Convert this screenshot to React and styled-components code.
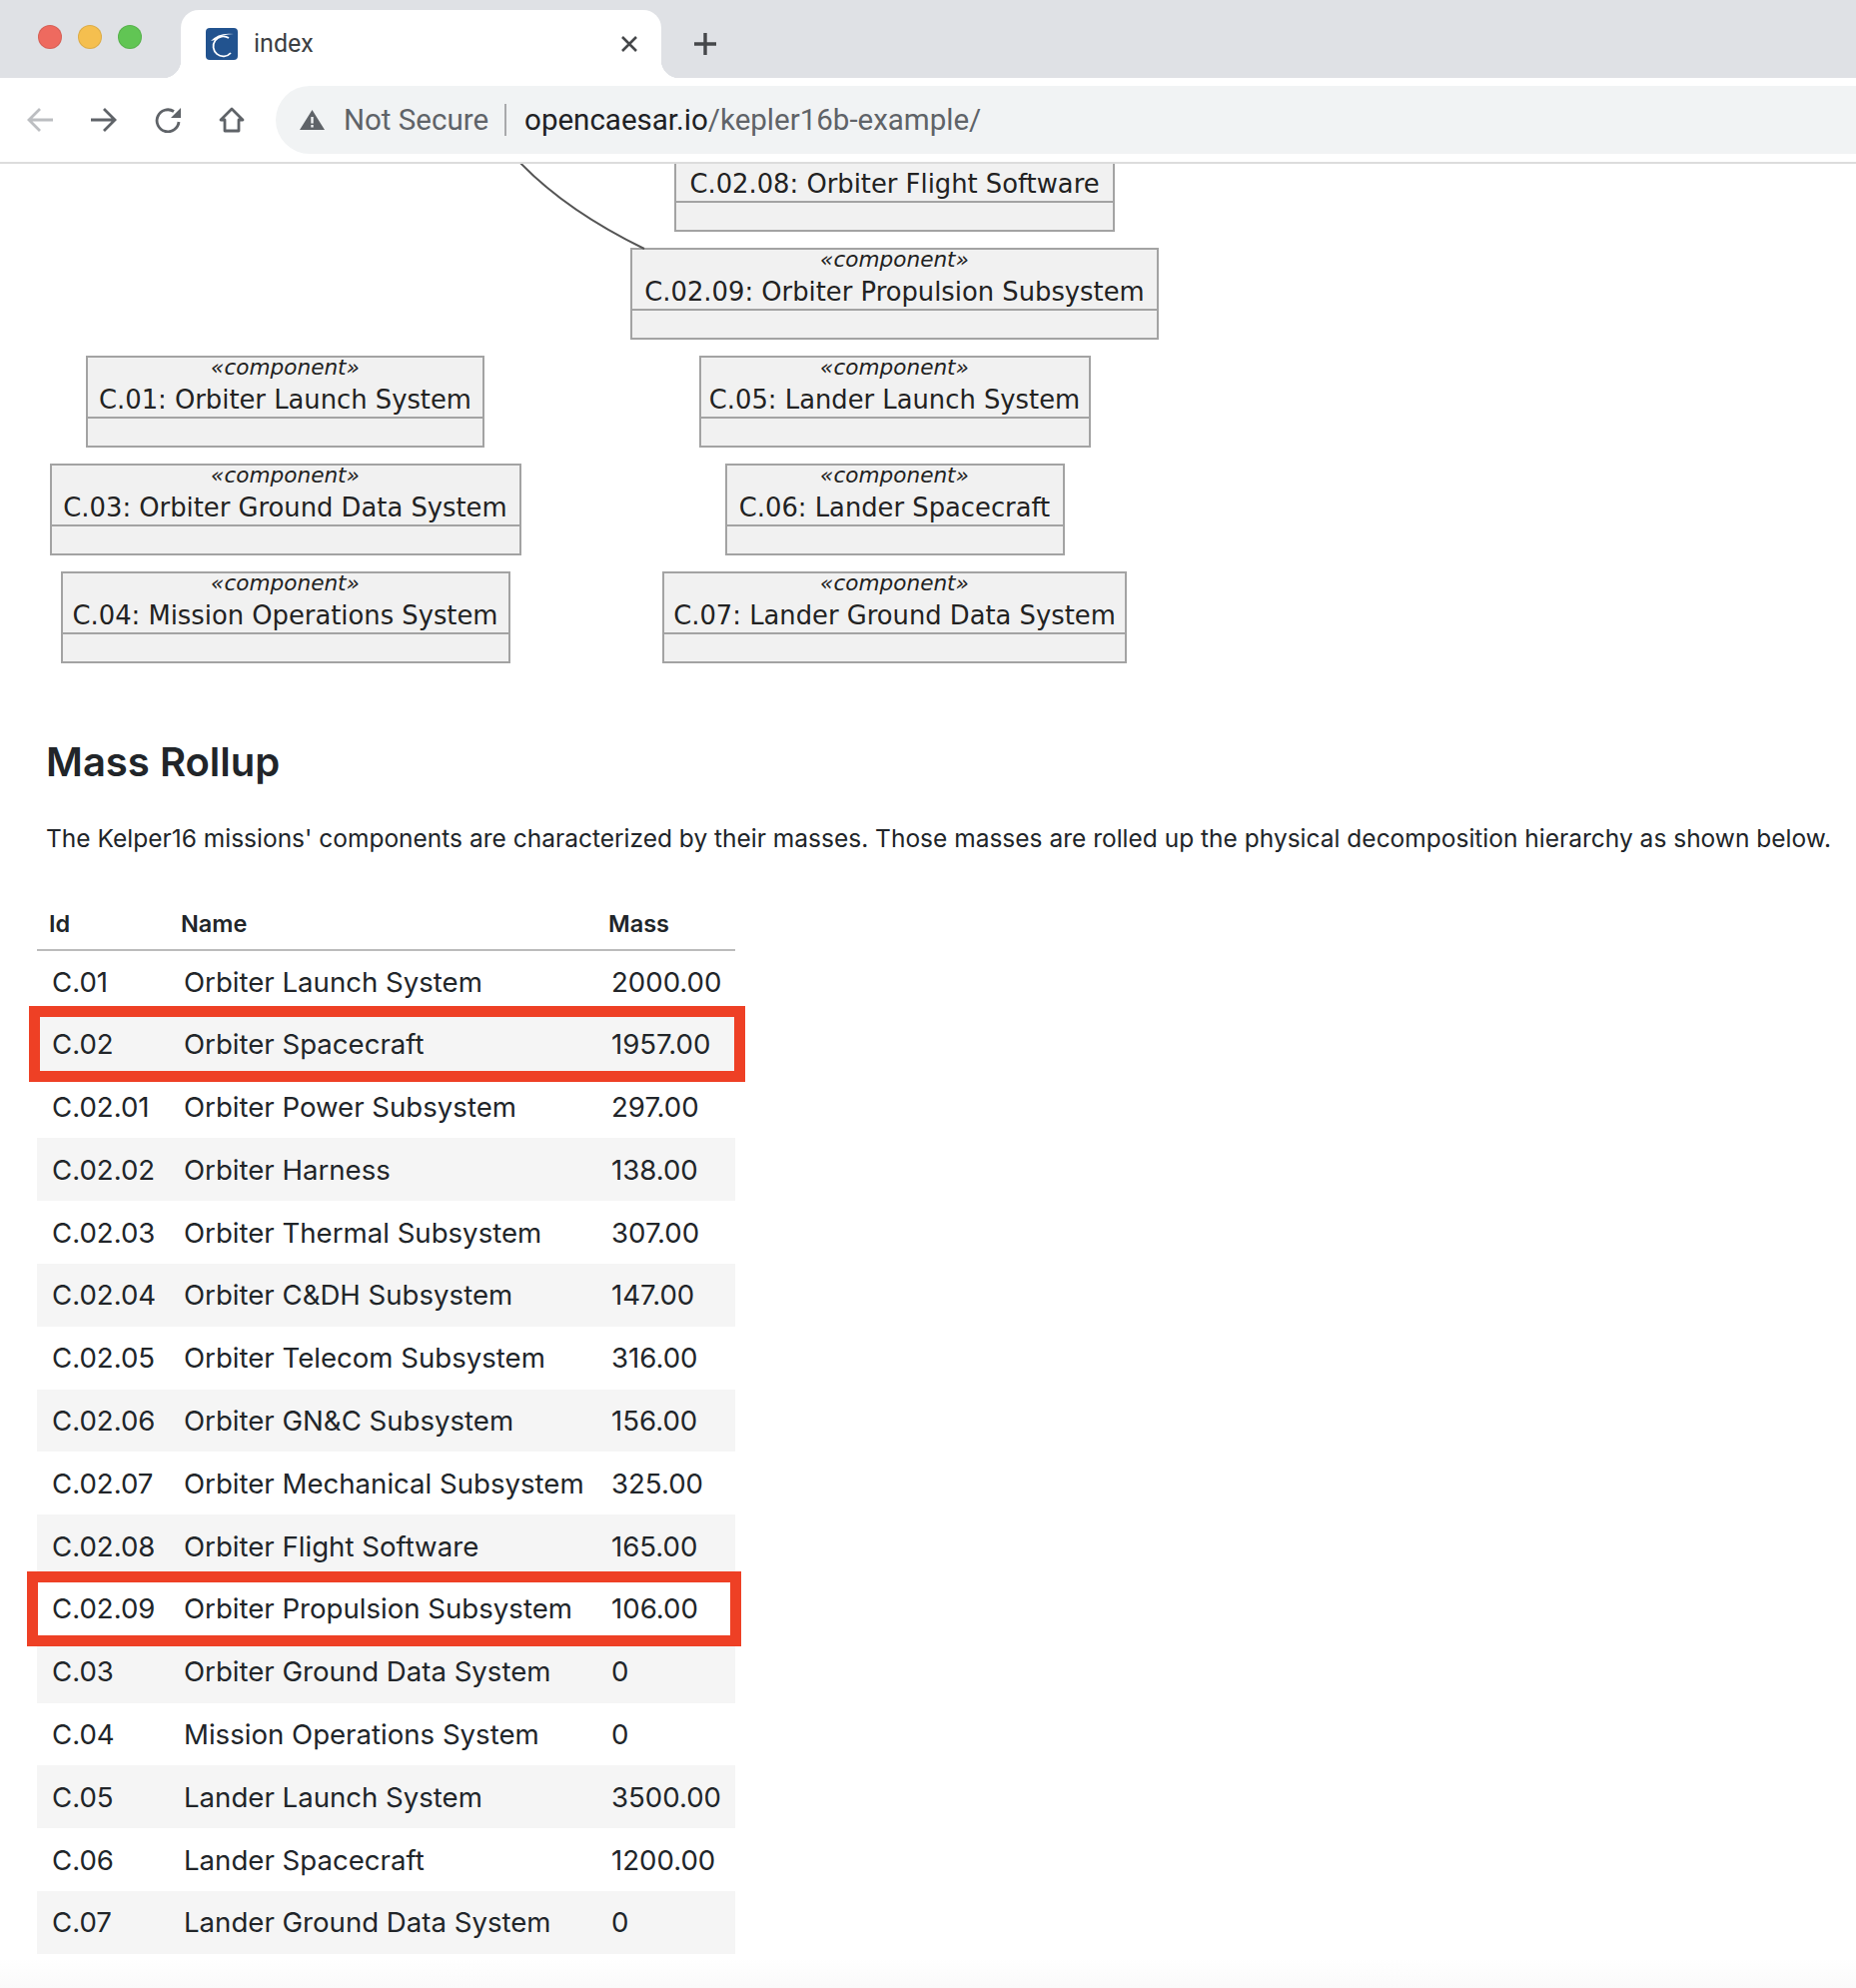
import React from 'react';
import styled, { createGlobalStyle } from 'styled-components';

const GlobalStyle = createGlobalStyle`
  html, body {
    margin: 0;
    background: #fff;
  }
`;

const Page = styled.div`
  width: 1858px;
  height: 1990px;
  overflow: hidden;
  display: flex;
  flex-direction: column;
  background: linear-gradient(to bottom, #fff 1960px, #fafafa 1990px);
`;

/* browser chrome */
const TabBar = styled.div`
  height: 78px;
  flex: none;
  display: flex;
  background: #dfe1e5;
  font-family: Roboto, sans-serif;
`;

const Lights = styled.div`
  width: 181px;
  flex: none;
  display: flex;
  gap: 16px;
  padding: 25px 0 0 38px;
  box-sizing: border-box;
`;

const Light = styled.span`
  width: 24px;
  height: 24px;
  border-radius: 50%;
  background: ${p => p.$color};
  box-shadow: inset 0 0 0 1px rgba(0, 0, 0, .1);
`;

const Tab = styled.div`
  position: relative;
  width: 481px;
  height: 68px;
  margin-top: 10px;
  padding: 18px 24px 0 25px;
  box-sizing: border-box;
  display: flex;
  align-items: flex-start;
  gap: 16px;
  background: #fff;
  border-radius: 18px 18px 0 0;

  &::before, &::after {
    content: '';
    position: absolute;
    bottom: 0;
    width: 18px;
    height: 18px;
  }
  &::before {
    left: -18px;
    background: radial-gradient(circle at 0 0, transparent 18px, #fff 18.5px);
  }
  &::after {
    right: -18px;
    background: radial-gradient(circle at 100% 0, transparent 18px, #fff 18.5px);
  }
`;

const TabTitle = styled.span`
  flex: 1;
  font-size: 25px;
  line-height: 32px;
  color: #3c4043;
`;

const TabButton = styled.svg`
  flex: none;
  margin-top: 8px;
`;

const NewTab = styled.svg`
  margin: 32px 0 0 32px;
`;

const Toolbar = styled.div`
  height: 86px;
  flex: none;
  display: flex;
  align-items: center;
  padding: 0 0 0 27px;
  box-sizing: border-box;
  background: #fff;
  border-bottom: 2px solid #dcdcdc;
  font-family: Roboto, sans-serif;
`;

const NavIcon = styled.svg`
  flex: none;
  margin-right: 38px;
`;

const Omnibox = styled.div`
  flex: 1;
  height: 68px;
  margin-left: -7px;
  padding-left: 24px;
  display: flex;
  align-items: center;
  background: #f1f3f4;
  border-radius: 34px 0 0 34px;
  font-size: 29.5px;
`;

const NotSecure = styled.span`
  margin-left: 19px;
  padding-right: 16px;
  line-height: 32px;
  color: #5f6368;
  border-right: 2px solid #a8a9ab;
`;

const Url = styled.span`
  margin-left: 18px;
  color: #5f6368;

  b {
    font-weight: 400;
    color: #202124;
  }
`;

/* diagram */
const Main = styled.main`
  flex: 1;
  overflow: hidden;
  font-family: Inter, sans-serif;
  color: #212529;
`;

const Diagram = styled.div`
  position: relative;
  margin-top: -24px;
  display: grid;
  grid-template-columns: 571px 649px;
`;

const Edge = styled.svg`
  position: absolute;
  top: 0;
  left: 0;
`;

const NodeColumn = styled.div`
  display: flex;
  flex-direction: column;
  align-items: center;
  gap: 16px;
  padding-top: ${p => p.$top || 0}px;
`;

const Node = styled.div`
  width: ${p => p.$w}px;
  height: 92px;
  box-sizing: border-box;
  background: #f1f1f1;
  border: 2px solid #a3a3a3;
  font-family: "DejaVu Sans", sans-serif;
  color: #222;
  text-align: center;
`;

const NodeHead = styled.div`
  height: 61px;
  box-sizing: border-box;
  border-bottom: 2px solid #a3a3a3;
  white-space: nowrap;
`;

const Stereotype = styled.div`
  font-size: 21.6px;
  line-height: 20px;
  font-style: italic;
`;

const NodeName = styled.div`
  padding-top: 3px;
  font-size: 25.8px;
  line-height: 38px;
`;

/* mass rollup */
const Heading = styled.h2`
  margin: 74px 0 0 46px;
  font-size: 40px;
  line-height: 50px;
  font-weight: 600;
  color: #212529;
`;

const Intro = styled.p`
  margin: 33px 0 0 46px;
  width: 1800px;
  font-size: 24.5px;
  line-height: 36px;
  white-space: nowrap;
`;

const Table = styled.table`
  margin: 40px 0 0 37px;
  width: 699px;
  table-layout: fixed;
  border-collapse: collapse;
  font-size: 27.6px;
`;

const HeadCell = styled.th`
  box-sizing: border-box;
  height: 54px;
  width: ${p => p.$w}px;
  padding: 2px 0 0 12px;
  text-align: left;
  font-size: 23.5px;
  font-weight: 600;
  border-bottom: 2px solid #bbb;
`;

const Row = styled.tr`
  position: relative;
  height: 62.8px;
  background: ${p => (p.$striped ? '#f5f5f5' : 'transparent')};

  ${p => p.$mark && `
    &::after {
      content: '';
      position: absolute;
      z-index: 1;
      top: ${p.$mark[0]}px;
      right: ${p.$mark[1]}px;
      bottom: ${p.$mark[2]}px;
      left: ${p.$mark[3]}px;
      border: 11px solid #ee4025;
      pointer-events: none;
    }
  `}
`;

const Cell = styled.td`
  box-sizing: border-box;
  padding: 0 0 0 15px;
  white-space: nowrap;
`;

const rows = [
  ['C.01', 'Orbiter Launch System', '2000.00'],
  ['C.02', 'Orbiter Spacecraft', '1957.00'],
  ['C.02.01', 'Orbiter Power Subsystem', '297.00'],
  ['C.02.02', 'Orbiter Harness', '138.00'],
  ['C.02.03', 'Orbiter Thermal Subsystem', '307.00'],
  ['C.02.04', 'Orbiter C&DH Subsystem', '147.00'],
  ['C.02.05', 'Orbiter Telecom Subsystem', '316.00'],
  ['C.02.06', 'Orbiter GN&C Subsystem', '156.00'],
  ['C.02.07', 'Orbiter Mechanical Subsystem', '325.00'],
  ['C.02.08', 'Orbiter Flight Software', '165.00'],
  ['C.02.09', 'Orbiter Propulsion Subsystem', '106.00'],
  ['C.03', 'Orbiter Ground Data System', '0'],
  ['C.04', 'Mission Operations System', '0'],
  ['C.05', 'Lander Launch System', '3500.00'],
  ['C.06', 'Lander Spacecraft', '1200.00'],
  ['C.07', 'Lander Ground Data System', '0'],
];

// the two red boxes drawn over the table: top, right, bottom, left
const marks = {
  'C.02': [-7, -10, -6, -8],
  'C.02.09': [-6, -6, -6, -10],
};

const leftNodes = [
  ['C.01: Orbiter Launch System', 399],
  ['C.03: Orbiter Ground Data System', 472],
  ['C.04: Mission Operations System', 450],
];

const rightNodes = [
  ['C.02.08: Orbiter Flight Software', 441],
  ['C.02.09: Orbiter Propulsion Subsystem', 529],
  ['C.05: Lander Launch System', 392],
  ['C.06: Lander Spacecraft', 340],
  ['C.07: Lander Ground Data System', 465],
];

const ComponentNode = ({ name, width }) => (
  <Node $w={width}>
    <NodeHead>
      <Stereotype>«component»</Stereotype>
      <NodeName>{name}</NodeName>
    </NodeHead>
  </Node>
);

const Browser = () => (
  <>
    <TabBar>
      <Lights>
        <Light $color="#ee6a5f" />
        <Light $color="#f5bf4f" />
        <Light $color="#61c554" />
      </Lights>
      <Tab>
        <svg width="32" height="32" viewBox="0 0 32 32" style={{ flex: 'none' }}>
          <rect width="32" height="32" rx="4" fill="#22538f" />
          <path d="M25 25 A10 10 0 1 1 23 10" fill="none" stroke="#fff" strokeWidth="1.8" />
          <path d="M5 13 Q13 4 28 6 Q16 6 9 12" fill="#fff" />
        </svg>
        <TabTitle>index</TabTitle>
        <TabButton width="16" height="16" viewBox="0 0 16 16">
          <path d="M1 1 L15 15 M15 1 L1 15" stroke="#45474a" strokeWidth="2.6" />
        </TabButton>
      </Tab>
      <NewTab width="24" height="24" viewBox="0 0 24 24">
        <path d="M12 1 V23 M1 12 H23" stroke="#45474a" strokeWidth="3.4" />
      </NewTab>
    </TabBar>
    <Toolbar>
      <NavIcon width="26" height="26" viewBox="0 0 26 26">
        <path d="M26 13 H2 M13 2 L2 13 L13 24" fill="none" stroke="#bcbec1" strokeWidth="2.8" />
      </NavIcon>
      <NavIcon width="26" height="26" viewBox="0 0 26 26">
        <path d="M0 13 H24 M13 2 L24 13 L13 24" fill="none" stroke="#5f6368" strokeWidth="2.8" />
      </NavIcon>
      <NavIcon width="26" height="26" viewBox="0 0 26 26">
        <path d="M19 4.5 A11 11 0 1 0 24 15" fill="none" stroke="#5f6368" strokeWidth="2.8" />
        <path d="M26 1 V11 H16 Z" fill="#5f6368" />
      </NavIcon>
      <NavIcon width="26" height="26" viewBox="0 0 26 26">
        <path d="M13 2 L24 13 H20 V24 H6 V13 H2 Z" fill="none" stroke="#5f6368" strokeWidth="2.8" strokeLinejoin="round" />
      </NavIcon>
      <Omnibox>
        <svg width="25" height="20" viewBox="0 0 25 20" style={{ flex: 'none' }}>
          <path d="M12.5 0 L25 20 H0 Z" fill="#5f6368" />
          <path d="M11.3 7 H13.7 V13.5 H11.3 Z M11.3 15 H13.7 V17.5 H11.3 Z" fill="#f1f3f4" />
        </svg>
        <NotSecure>Not Secure</NotSecure>
        <Url><b>opencaesar.io</b>/kepler16b-example/</Url>
      </Omnibox>
    </Toolbar>
  </>
);

export default function App() {
  return (
    <Page>
      <GlobalStyle />
      <Browser />
      <Main>
        <Diagram>
          <NodeColumn $top={216}>
            {leftNodes.map(([name, width]) => (
              <ComponentNode key={name} name={name} width={width} />
            ))}
          </NodeColumn>
          <NodeColumn>
            {rightNodes.map(([name, width]) => (
              <ComponentNode key={name} name={name} width={width} />
            ))}
          </NodeColumn>
          <Edge width="700" height="120" viewBox="0 0 700 120">
            <path d="M518 20 Q565 70 645 109" fill="none" stroke="#555" strokeWidth="2" />
          </Edge>
        </Diagram>
        <Heading>Mass Rollup</Heading>
        <Intro>
          The Kelper16 missions' components are characterized by their masses. Those masses are rolled up the physical decomposition hierarchy as shown below.
        </Intro>
        <Table>
          <thead>
            <tr>
              <HeadCell $w={132}>Id</HeadCell>
              <HeadCell $w={428}>Name</HeadCell>
              <HeadCell $w={139}>Mass</HeadCell>
            </tr>
          </thead>
          <tbody>
            {rows.map(([id, name, mass], i) => (
              <Row key={id} $striped={i % 2 === 1} $mark={marks[id]}>
                <Cell>{id}</Cell>
                <Cell>{name}</Cell>
                <Cell>{mass}</Cell>
              </Row>
            ))}
          </tbody>
        </Table>
      </Main>
    </Page>
  );
}
